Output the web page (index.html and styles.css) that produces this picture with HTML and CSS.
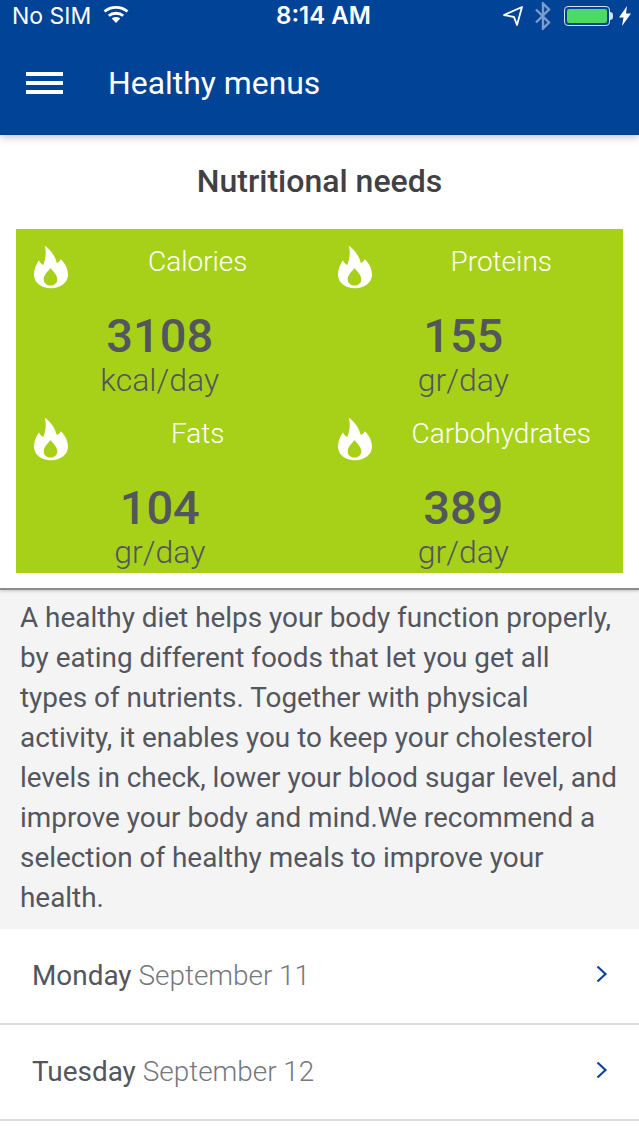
FILE: index.html
```html
<!DOCTYPE html>
<html lang="en">
<head>
  <meta charset="UTF-8" />
  <meta name="viewport" content="width=device-width, initial-scale=1.0"/>
  <title>Healthy menus</title>
  <link rel="stylesheet" href="styles.css">
</head>
<body>
  <svg class="defs" width="0" height="0">
    <symbol id="flame" viewBox="0 0 35 44">
      <path fill="#fff" fill-rule="evenodd" d="M11 0C17 4 21.500 10 23.500 18C25.500 17 27 15.500 27.500 14C32 18 35 24 35 30C35 38 27 44 17.500 44C7.500 44 0 38 0 30C0 24 2 20 5 15C6 17 7.500 19 9.500 20C12 14 13 6 11 0ZM17 23C20 27 24 30 24 34.500C24 38.500 21 41 17 41C13 41 10 38.500 10 34.500C10 30 14 27 17 23Z"/>
    </symbol>
  </svg>

  <header class="appbar">
    <div class="statusbar">
      <div class="status-left">
        <span>No SIM</span>
        <svg class="wifi" width="26" height="19" viewBox="0 0 26 19">
          <path fill="none" stroke="#fff" stroke-width="2.800" d="M1.500 6.500c6.500-5.500 16.500-5.500 23 0M5.800 10.800c4-3.400 10.400-3.400 14.400 0"/>
          <path fill="#fff" d="M13 18l-4.200-4.400c2.400-2 6-2 8.400 0z"/>
        </svg>
      </div>
      <div class="status-time">8:14 AM</div>
      <div class="status-right">
        <svg width="22" height="22" viewBox="0 0 22 22">
          <path fill="none" stroke="#fff" stroke-width="1.800" stroke-linejoin="round" d="M2 10L20 2l-5 18-3-8z"/>
        </svg>
        <svg class="bluetooth" width="18" height="28" viewBox="0 0 18 28">
          <path fill="none" stroke="#7d9ccb" stroke-width="2.400" d="M2 7.500l13 13L9 26.500V1.500l6 6-13 13"/>
        </svg>
        <div class="battery"><div class="battery-fill"></div></div>
        <div class="battery-cap"></div>
        <svg class="bolt" width="12" height="20" viewBox="0 0 12 20">
          <path fill="#fff" d="M8 0L0 11.500h4.500L3 20l9-12.500H7z"/>
        </svg>
      </div>
    </div>
    <div class="toolbar">
      <div class="menu-icon"><span></span><span></span><span></span></div>
      <h1>Healthy menus</h1>
    </div>
  </header>

  <section class="needs">
    <h2>Nutritional needs</h2>
    <div class="needs-grid">
      <div class="need">
        <div class="need-head">
          <svg class="flame"><use href="#flame"/></svg>
          <div class="need-label">Calories</div>
        </div>
        <div class="need-value">3108</div>
        <div class="need-unit">kcal/day</div>
      </div>
      <div class="need">
        <div class="need-head">
          <svg class="flame"><use href="#flame"/></svg>
          <div class="need-label">Proteins</div>
        </div>
        <div class="need-value">155</div>
        <div class="need-unit">gr/day</div>
      </div>
      <div class="need">
        <div class="need-head">
          <svg class="flame"><use href="#flame"/></svg>
          <div class="need-label">Fats</div>
        </div>
        <div class="need-value">104</div>
        <div class="need-unit">gr/day</div>
      </div>
      <div class="need">
        <div class="need-head">
          <svg class="flame"><use href="#flame"/></svg>
          <div class="need-label">Carbohydrates</div>
        </div>
        <div class="need-value">389</div>
        <div class="need-unit">gr/day</div>
      </div>
    </div>
  </section>

  <p class="intro">A healthy diet helps your body function properly, by eating different foods that let you get all types of nutrients. Together with physical activity, it enables you to keep your cholesterol levels in check, lower your blood sugar level, and improve your body and mind.We recommend a selection of healthy meals to improve your health.</p>

  <ul class="days">
    <li class="day">
      <span><span class="day-name">Monday</span> <span class="day-date">September 11</span></span>
      <svg class="chevron" width="12" height="18" viewBox="0 0 12 18">
        <path fill="none" stroke="#0a4596" stroke-width="2.200" d="M1.500 1.500L9.500 9l-8 7.500"/>
      </svg>
    </li>
    <li class="day">
      <span><span class="day-name">Tuesday</span> <span class="day-date">September 12</span></span>
      <svg class="chevron" width="12" height="18" viewBox="0 0 12 18">
        <path fill="none" stroke="#0a4596" stroke-width="2.200" d="M1.500 1.500L9.500 9l-8 7.500"/>
      </svg>
    </li>
  </ul>
</body>
</html>
```

FILE: styles.css
```css
* {
  box-sizing: border-box;
}

html, body {
  height: 1136px;
  overflow: hidden;
}

body {
  margin: 0;
  font-family: Roboto, sans-serif;
  background: white;
  color: #53565c;
}

.defs {
  display: block;
  height: 0;
}

.appbar {
  height: 135px;
  background: #014397;
  color: white;
  box-shadow: 0 2px 8px rgba(0,0,0,0.25);
}

.statusbar {
  height: 31px;
  padding: 0 8px 0 12px;
  display: grid;
  grid-template-columns: 1fr auto 1fr;
  align-items: center;
  font-family: Inter, "Liberation Sans", Arial, sans-serif;
  font-size: 23px;
}

.status-left {
  display: flex;
  align-items: center;
  gap: 12px;
}

.wifi {
  margin-top: -3px;
}

.status-time {
  font-size: 24px;
  font-weight: 600;
  margin-left: 4px;
}

.status-right {
  display: flex;
  align-items: center;
  justify-content: flex-end;
}

.bluetooth {
  margin-left: 10px;
}

.battery {
  width: 46px;
  height: 20px;
  margin-left: 12px;
  padding: 2px;
  border: 1.500px solid #cfe0ef;
  border-radius: 4px;
}

.battery-fill {
  height: 100%;
  background: #4cd964;
  border-radius: 2px;
}

.battery-cap {
  width: 3px;
  height: 8px;
  background: #cfe0ef;
  border-radius: 0 3px 3px 0;
}

.bolt {
  margin-left: 6px;
}

.toolbar {
  height: 104px;
  padding: 0 26px;
  display: flex;
  align-items: center;
  gap: 45px;
}

.menu-icon {
  width: 37px;
  display: flex;
  flex-direction: column;
  gap: 5px;
}

.menu-icon span {
  height: 4px;
  background: white;
}

h1 {
  margin: 0;
  font-size: 31.900px;
  font-weight: 400;
}

.needs {
  height: 455px;
  padding: 0 16px;
  border-bottom: 2px solid #8c8c8c;
  box-shadow: 0 1px 3px rgba(0,0,0,0.2);
  position: relative;
}

h2 {
  margin: 0;
  height: 94px;
  line-height: 93px;
  font-size: 32px;
  font-weight: 500;
  text-align: center;
  color: #3f4145;
}

.needs-grid {
  height: 344px;
  display: grid;
  grid-template-columns: 1fr 1fr;
  grid-template-rows: 1fr 1fr;
  background: #a7d119;
}

.need {
  padding: 16px 16px 0 0;
  text-align: center;
}

.need-head {
  height: 52px;
  padding-left: 18px;
  display: flex;
  align-items: flex-start;
}

.flame {
  width: 34px;
  height: 44px;
  flex: none;
}

.need-label {
  flex: 1;
  margin: 1px -16px 0 0;
  padding-left: 8px;
  font-size: 28px;
  font-weight: 300;
  line-height: 32px;
  color: white;
}

.need-value {
  font-size: 47px;
  font-weight: 500;
  line-height: 54px;
  margin-top: 12px;
}

.need-unit {
  font-size: 32px;
  font-weight: 300;
  line-height: 34px;
}

.intro {
  height: 339px;
  margin: 0;
  padding: 8px 18px 0 20px;
  font-size: 27.900px;
  line-height: 40px;
  background: #f4f4f4;
}

.days {
  margin: 0;
  padding: 0;
  list-style: none;
}

.day {
  height: 96px;
  padding: 0 31px 2px 32px;
  display: flex;
  align-items: center;
  justify-content: space-between;
  border-bottom: 2px solid #dcdcdc;
  font-size: 27.900px;
}

.day-date {
  font-weight: 300;
  color: #75787d;
}

.chevron {
  margin-top: -3px;
}
```
